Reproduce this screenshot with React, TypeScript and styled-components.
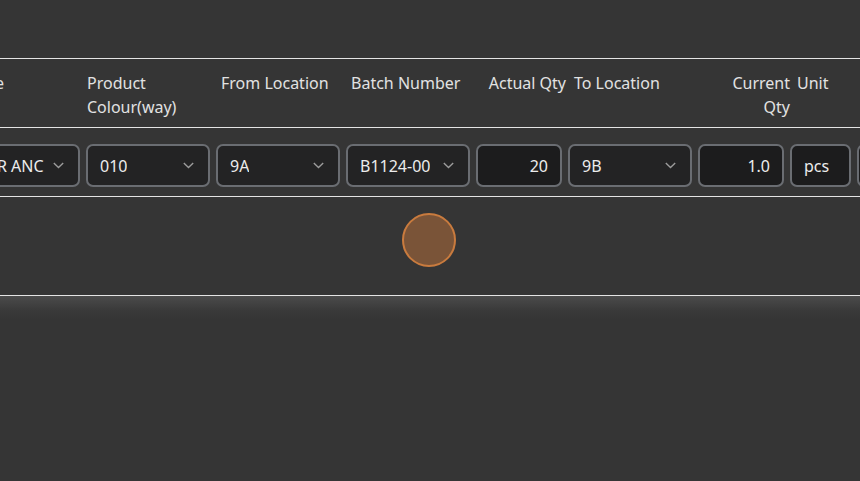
import React from "react";
import styled, { createGlobalStyle } from "styled-components";

const Global = createGlobalStyle`
  html, body { margin: 0; padding: 0; background: #353535; }
  body { font-family: "Noto Sans", "Open Sans", sans-serif; color: #e6e6e6; }
  * { box-sizing: border-box; }
`;

const Page = styled.div`
  width: 860px;
  height: 481px;
  overflow: hidden;
  background: #353535;
  display: flex;
  flex-direction: column;
`;

const TopSpace = styled.div`
  height: 58px;
  flex: none;
`;

const Table = styled.div`
  border-top: 1px solid #e4e4e4;
  overflow: hidden;
  flex: none;
`;

const cols = "124px 124px 124px 124px 86px 124px 86px 61px 124px";

const Row = styled.div<{ $h: number; $pt: number }>`
  display: grid;
  grid-template-columns: ${cols};
  column-gap: 6px;
  margin-left: -44px;
  width: max-content;
  height: ${(p) => p.$h}px;
  padding-top: ${(p) => p.$pt}px;
  align-items: start;
`;

const RowWrap = styled.div`
  border-bottom: 1px solid #e4e4e4;
  overflow: hidden;
`;

const HeadCell = styled.div<{ $inset: number; $right?: boolean; $out?: number }>`
  font-size: 16px;
  line-height: 24px;
  color: #e2e2e2;
  padding-left: ${(p) => p.$inset}px;
  margin-right: ${(p) => -(p.$out ?? 0)}px;
  text-align: ${(p) => (p.$right ? "right" : "left")};
  white-space: normal;
`;

const SelectBox = styled.div`
  height: 43px;
  border: 2px solid #6a6d72;
  border-radius: 7px;
  background: #232324;
  display: flex;
  align-items: center;
  justify-content: space-between;
  padding: 0 14px 0 12px;
  font-size: 16px;
  color: #ececec;
  white-space: nowrap;
  overflow: hidden;
`;

const SelectText = styled.span`
  overflow: hidden;
`;

const NumBox = styled.div<{ $align?: "left" | "right" }>`
  height: 43px;
  border: 2px solid #6a6d72;
  border-radius: 7px;
  background: #1c1c1d;
  display: flex;
  align-items: center;
  justify-content: ${(p) => (p.$align === "left" ? "flex-start" : "flex-end")};
  padding: 0 12px;
  font-size: 16px;
  color: #ececec;
`;

const LoaderRow = styled.div`
  height: 98px;
  display: flex;
  justify-content: center;
  padding-top: 16px;
  padding-right: 2px;
`;

const Spinner = styled.div`
  width: 54px;
  height: 54px;
  border-radius: 50%;
  background: #7a5438;
  border: 2px solid #c97b3e;
`;

const Footer = styled.div`
  flex: 1;
  background: linear-gradient(#4b4b4b 0px, #3a3a3a 14px, #353535 24px);
`;

const Chevron = () => (
  <svg width="11" height="7" viewBox="0 0 11 7" style={{ flex: "none" }}>
    <polyline points="0.8,1 5.5,5.6 10.2,1" fill="none" stroke="#9b9b9b" strokeWidth="1.4" />
  </svg>
);

const Select = ({ value }: { value: string }) => (
  <SelectBox>
    <SelectText>{value}</SelectText>
    <Chevron />
  </SelectBox>
);

export default function App() {
  return (
    <Page>
      <Global />
      <TopSpace />
      <Table>
        <RowWrap>
          <Row $h={68} $pt={12}>
            <HeadCell $inset={3}>Name</HeadCell>
            <HeadCell $inset={1}>Product Colour(way)</HeadCell>
            <HeadCell $inset={5}>From Location</HeadCell>
            <HeadCell $inset={5}>Batch Number</HeadCell>
            <HeadCell $inset={0} $right $out={4}>Actual Qty</HeadCell>
            <HeadCell $inset={6}>To Location</HeadCell>
            <HeadCell $inset={20} $right $out={6}>Current Qty</HeadCell>
            <HeadCell $inset={7}>Unit</HeadCell>
            <HeadCell $inset={5}></HeadCell>
          </Row>
        </RowWrap>
        <RowWrap>
          <Row $h={68} $pt={16}>
            <Select value="MOR ANC" />
            <Select value="010" />
            <Select value="9A" />
            <Select value="B1124-00" />
            <NumBox>20</NumBox>
            <Select value="9B" />
            <NumBox>1.0</NumBox>
            <NumBox $align="left">pcs</NumBox>
            <NumBox $align="left"></NumBox>
          </Row>
        </RowWrap>
        <RowWrap>
          <LoaderRow>
            <Spinner />
          </LoaderRow>
        </RowWrap>
      </Table>
      <Footer />
    </Page>
  );
}
